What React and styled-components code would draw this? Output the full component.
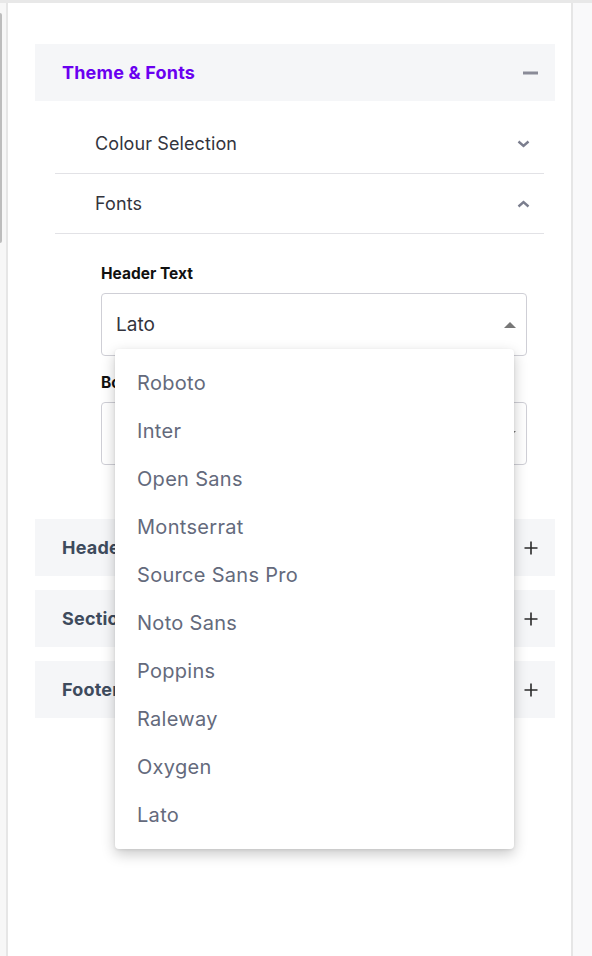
import React from "react";
import styled, { createGlobalStyle } from "styled-components";

const GlobalStyle = createGlobalStyle`
  html, body {
    margin: 0;
    padding: 0;
    background: #f9f9fa;
    font-family: "Inter", "Noto Sans", sans-serif;
  }
`;

const fonts = [
  "Roboto",
  "Inter",
  "Open Sans",
  "Montserrat",
  "Source Sans Pro",
  "Noto Sans",
  "Poppins",
  "Raleway",
  "Oxygen",
  "Lato",
];

// layout
const Page = styled.div`
  display: flex;
  height: 956px;
  border-top: 3px solid #e8e8e8;
  box-sizing: border-box;
  overflow: hidden;
`;
const LeftGutter = styled.div`
  width: 6px;
  background: #f7f7f7;
  border-right: 2px solid #e6e6e6;
  padding-top: 10px;
  box-sizing: content-box;
`;
const ScrollThumb = styled.div`
  width: 2px;
  height: 230px;
  background: #bdbdbd;
  border-radius: 0 2px 2px 0;
`;
const Panel = styled.div`
  position: relative;
  width: 563px;
  background: #ffffff;
  padding: 41px 16px 0 27px;
  box-sizing: border-box;
  display: flex;
  flex-direction: column;
  gap: 14px;
`;
const RightGutter = styled.div`
  flex: 1;
  background: #f9f9fa;
  border-left: 2px solid #e6e6e6;
`;

// accordion
const Section = styled.div`
  display: flex;
  flex-direction: column;
`;
const SectionHeader = styled.div`
  height: 57px;
  background: #f5f6f8;
  display: flex;
  align-items: center;
  justify-content: space-between;
  padding: 0 17px 0 27px;
`;
const SectionTitle = styled.span`
  font-size: 18px;
  font-weight: 700;
  letter-spacing: 0.2px;
  color: ${(p) => (p.$active ? "#6a00f0" : "#3e4b5d")};
`;
const SectionBody = styled.div`
  padding: 13px 11px 23px 20px;
`;
const SubRow = styled.div`
  height: 60px;
  box-sizing: border-box;
  display: flex;
  align-items: center;
  justify-content: space-between;
  padding: 0 14px 0 40px;
  border-bottom: 1px solid #e2e2e6;
  font-size: 18px;
  letter-spacing: 0.1px;
  color: #33343d;
`;
const Fields = styled.div`
  padding: 30px 17px 0 46px;
  display: flex;
  flex-direction: column;
`;
const Label = styled.div`
  font-size: 15.5px;
  font-weight: 700;
  color: #111;
  margin-bottom: 10px;
`;
const Select = styled.div`
  height: 63px;
  border: 1px solid #cfcfd6;
  border-radius: 4px;
  box-sizing: border-box;
  display: flex;
  align-items: center;
  justify-content: space-between;
  padding: 0 10px 0 14px;
  font-size: 19px;
  color: #33343d;
  margin-bottom: 17px;
`;
const Caret = styled.span`
  width: 0;
  height: 0;
  border-left: 6px solid transparent;
  border-right: 6px solid transparent;
  ${(p) =>
    p.$up
      ? "border-bottom: 6px solid #777;"
      : "border-top: 6px solid #777;"}
`;

// dropdown
const Menu = styled.div`
  position: absolute;
  top: 346px;
  left: 107px;
  width: 399px;
  background: #fff;
  border-radius: 4px;
  box-shadow: 0 5px 14px rgba(0, 0, 0, 0.22), 0 1px 3px rgba(0, 0, 0, 0.08);
  padding: 10px 0;
  z-index: 10;
`;
const MenuItem = styled.div`
  height: 48px;
  display: flex;
  align-items: center;
  padding-left: 22px;
  font-size: 20px;
  letter-spacing: 0.3px;
  color: #646a7c;
`;

const Minus = () => (
  <svg width="15" height="4" viewBox="0 0 15 4">
    <rect width="15" height="3" y="0.5" fill="#8a8b98" />
  </svg>
);
const Plus = () => (
  <svg width="14" height="14" viewBox="0 0 14 14">
    <path d="M7 0.5v13M0.5 7h13" stroke="#2a2a2a" strokeWidth="1.6" />
  </svg>
);
const Chevron = ({ up }) => (
  <svg width="13" height="8" viewBox="0 0 13 8">
    <path
      d={up ? "M1.5 6.5L6.5 2l5 4.5" : "M1.5 1.5L6.5 6l5-4.5"}
      fill="none"
      stroke="#7b7e8e"
      strokeWidth="2.4"
    />
  </svg>
);

function App() {
  return (
    <>
      <GlobalStyle />
      <Page>
        <LeftGutter>
          <ScrollThumb />
        </LeftGutter>
        <Panel>
          <Section>
            <SectionHeader>
              <SectionTitle $active>Theme &amp; Fonts</SectionTitle>
              <Minus />
            </SectionHeader>
            <SectionBody>
              <SubRow>
                Colour Selection
                <Chevron />
              </SubRow>
              <SubRow>
                Fonts
                <Chevron up />
              </SubRow>
              <Fields>
                <Label>Header Text</Label>
                <Select>
                  Lato
                  <Caret $up />
                </Select>
                <Label>Body Text</Label>
                <Select>
                  Lato
                  <Caret />
                </Select>
              </Fields>
            </SectionBody>
          </Section>
          {["Header", "Section", "Footer"].map((title) => (
            <Section key={title}>
              <SectionHeader>
                <SectionTitle>{title}</SectionTitle>
                <Plus />
              </SectionHeader>
            </Section>
          ))}
          <Menu>
            {fonts.map((f) => (
              <MenuItem key={f}>{f}</MenuItem>
            ))}
          </Menu>
        </Panel>
        <RightGutter />
      </Page>
    </>
  );
}

export default App;
